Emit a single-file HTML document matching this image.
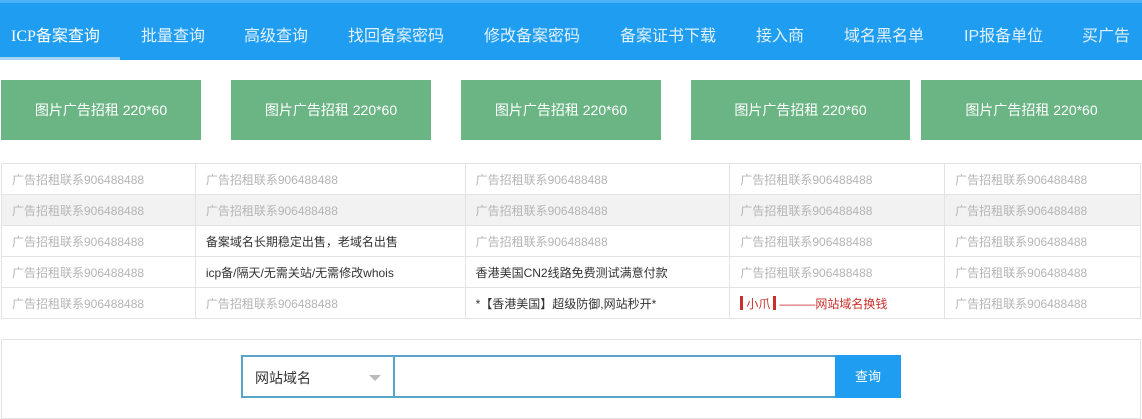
<!DOCTYPE html>
<html><head><meta charset="utf-8"><style>
*{margin:0;padding:0;box-sizing:border-box}
body{width:1142px;height:405px;overflow:hidden;background:#fff;font-family:"Liberation Sans","Noto Sans CJK SC",sans-serif;position:relative}
.nav{position:absolute;left:0;top:0;width:1142px;height:60px;background:#1f9df0;border-top:3px solid #49b1f5}
.nav span{position:absolute;top:19px;color:#e2f1fc;font-size:16px;white-space:nowrap}
.nav .act{color:#fff;font-family:"Liberation Serif","Noto Sans CJK SC",serif}
.ul{position:absolute;left:0;top:57px;width:120px;height:3px;background:#a6d6f7}
.g{position:absolute;top:80px;width:200px;height:60px;background:#6bb585;color:#fff;font-size:14px;text-align:center;line-height:60px}
table{position:absolute;left:1px;top:163px;width:1140px;border-collapse:collapse;font-size:12px;color:#b5b5b5}
td{border:1px solid #e3e3e3;height:31px;padding-left:10px;white-space:nowrap}
tr.gr td{background:#f2f2f2}
.k{color:#333}.r{color:#c9302c}
.bar{display:inline-block;width:3px;height:14px;background:#c9302c;vertical-align:-2px;margin:0 3px}
.box{position:absolute;left:1px;top:339px;width:1140px;height:80px;border:1px solid #e3e3e3}
.sel{position:absolute;left:241px;top:355px;width:154px;height:43px;border:2px solid #58a5c8;font-size:14px;color:#333;padding:11px 0 0 12px}
.sel i{position:absolute;right:12px;top:18px;border:6px solid transparent;border-top:6px solid #bbb}
.inp{position:absolute;left:393px;top:355px;width:444px;height:43px;border:2px solid #58a5c8;border-left:none}
.btn{position:absolute;left:835px;top:355px;width:66px;height:43px;background:#1f9df0;color:#fff;font-size:13px;text-align:center;line-height:43px}
</style></head><body>
<div class="nav">
<span class="act" style="left:11px">ICP备案查询</span>
<span style="left:141px">批量查询</span>
<span style="left:244px">高级查询</span>
<span style="left:348px">找回备案密码</span>
<span style="left:484px">修改备案密码</span>
<span style="left:620px">备案证书下载</span>
<span style="left:756px">接入商</span>
<span style="left:844px">域名黑名单</span>
<span style="left:964px">IP报备单位</span>
<span style="left:1082px">买广告</span>
</div>
<div class="ul"></div>
<div class="g" style="left:1px">图片广告招租 220*60</div>
<div class="g" style="left:231px">图片广告招租 220*60</div>
<div class="g" style="left:461px">图片广告招租 220*60</div>
<div class="g" style="left:691px;width:219px">图片广告招租 220*60</div>
<div class="g" style="left:921px;width:221px">图片广告招租 220*60</div>
<table>
<colgroup><col style="width:194px"><col style="width:270px"><col style="width:265px"><col style="width:215px"><col style="width:196px"></colgroup>
<tr><td>广告招租联系906488488</td><td>广告招租联系906488488</td><td>广告招租联系906488488</td><td>广告招租联系906488488</td><td>广告招租联系906488488</td></tr>
<tr class="gr"><td>广告招租联系906488488</td><td>广告招租联系906488488</td><td>广告招租联系906488488</td><td>广告招租联系906488488</td><td>广告招租联系906488488</td></tr>
<tr><td>广告招租联系906488488</td><td class="k">备案域名长期稳定出售，老域名出售</td><td>广告招租联系906488488</td><td>广告招租联系906488488</td><td>广告招租联系906488488</td></tr>
<tr><td>广告招租联系906488488</td><td class="k">icp备/隔天/无需关站/无需修改whois</td><td class="k">香港美国CN2线路免费测试满意付款</td><td>广告招租联系906488488</td><td>广告招租联系906488488</td></tr>
<tr><td>广告招租联系906488488</td><td>广告招租联系906488488</td><td class="k">*【香港美国】超级防御,网站秒开*</td><td class="r"><span class="bar" style="margin-left:0"></span>小爪<span class="bar"></span>———网站域名换钱</td><td>广告招租联系906488488</td></tr>
</table>
<div class="box"></div>
<div class="sel">网站域名<i></i></div>
<div class="inp"></div>
<div class="btn">查询</div>
</body></html>
